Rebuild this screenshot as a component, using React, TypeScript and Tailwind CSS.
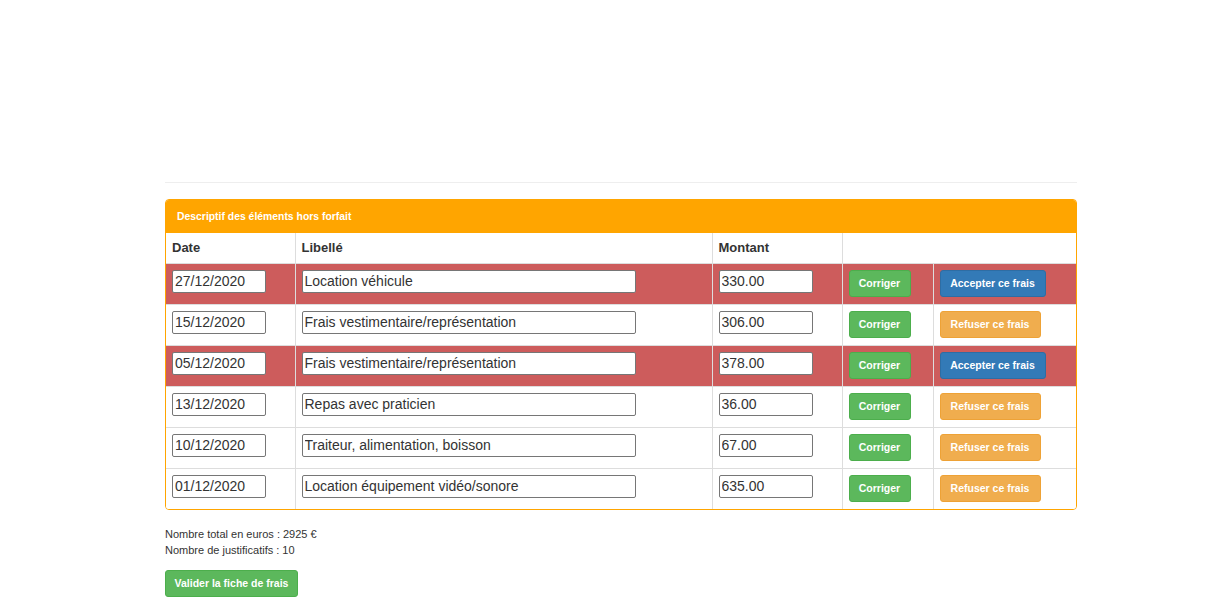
const rows = [
  { date: "27/12/2020", libelle: "Location véhicule", montant: "330.00", refused: true },
  { date: "15/12/2020", libelle: "Frais vestimentaire/représentation", montant: "306.00", refused: false },
  { date: "05/12/2020", libelle: "Frais vestimentaire/représentation", montant: "378.00", refused: true },
  { date: "13/12/2020", libelle: "Repas avec praticien", montant: "36.00", refused: false },
  { date: "10/12/2020", libelle: "Traiteur, alimentation, boisson", montant: "67.00", refused: false },
  { date: "01/12/2020", libelle: "Location équipement vidéo/sonore", montant: "635.00", refused: false },
];

function Field({ value, width }: { value: string; width: string }) {
  return (
    <input
      readOnly
      defaultValue={value}
      className={`${width} block h-[23px] border border-[#767676] rounded-[2px] bg-white px-[2px] text-[14px] text-[#333] outline-none`}
    />
  );
}

function App() {
  return (
    <div className="bg-white min-h-[608px] font-['Liberation_Sans',Arial,sans-serif] text-[#333]">
      <div className="ml-[165px] w-[912px] pt-[182px]">
        <hr className="border-0 border-t border-[#eee]" />
        <section className="mt-[16px] border border-[#ffa500] rounded-[4px] overflow-hidden">
          <div className="bg-[#ffa500] h-[33px] px-[11px] flex items-center text-[10.4px] font-bold text-white">
            Descriptif des éléments hors forfait
          </div>
          <table className="w-full border-collapse table-fixed">
            <colgroup>
              <col className="w-[129px]" />
              <col className="w-[417px]" />
              <col className="w-[130px]" />
              <col className="w-[91px]" />
              <col />
            </colgroup>
            <thead>
              <tr className="h-[30px] text-left text-[13px] font-bold">
                <th className="px-[6px] border-r border-b border-[#ddd]">Date</th>
                <th className="px-[6px] border-r border-b border-[#ddd]">Libellé</th>
                <th className="px-[6px] border-r border-b border-[#ddd]">Montant</th>
                <th className="border-b border-[#ddd]" colSpan={2}></th>
              </tr>
            </thead>
            <tbody>
              {rows.map((r, i) => (
                <tr
                  key={i}
                  className={`${r.refused ? "bg-[#cd5c5c]" : "bg-white"} ${i < rows.length - 1 ? "border-b border-[#ddd]" : ""}`}
                >
                  <td className="h-[41px] pl-[6px] pt-[6px] align-top border-r border-[#ddd]">
                    <Field value={r.date} width="w-[94px]" />
                  </td>
                  <td className="pl-[6px] pt-[6px] align-top border-r border-[#ddd]">
                    <Field value={r.libelle} width="w-[334px]" />
                  </td>
                  <td className="pl-[6px] pt-[6px] align-top border-r border-[#ddd]">
                    <Field value={r.montant} width="w-[94px]" />
                  </td>
                  <td className="pl-[6px] pt-[6px] align-top border-r border-[#ddd]">
                    <button className="block h-[27px] w-[62px] pt-[2px] rounded-[3px] border border-[#4cae4c] bg-[#5cb85c] text-[10.5px] font-bold text-white">
                      Corriger
                    </button>
                  </td>
                  <td className="pl-[6px] pt-[6px] align-top">
                    {r.refused ? (
                      <button className="block h-[27px] w-[106px] pt-[2px] rounded-[3px] border border-[#2e6da4] bg-[#337ab7] text-[10.5px] font-bold text-white">
                        Accepter ce frais
                      </button>
                    ) : (
                      <button className="block h-[27px] w-[101px] pt-[2px] rounded-[3px] border border-[#eea236] bg-[#f0ad4e] text-[10.5px] font-bold text-white">
                        Refuser ce frais
                      </button>
                    )}
                  </td>
                </tr>
              ))}
            </tbody>
          </table>
        </section>
        <div className="mt-[16px] text-[11px] leading-[16px]">
          <p>Nombre total en euros : 2925 €</p>
          <p>Nombre de justificatifs : 10</p>
        </div>
        <button className="mt-[12px] h-[27px] w-[133px] pt-[1px] rounded-[3px] border border-[#4cae4c] bg-[#5cb85c] text-[10.5px] font-bold text-white">
          Valider la fiche de frais
        </button>
      </div>
    </div>
  );
}

export default App;
